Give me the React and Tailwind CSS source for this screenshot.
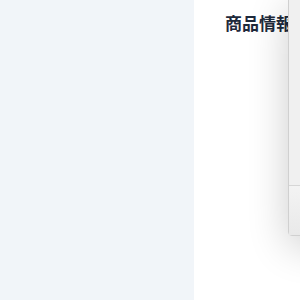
export default function App() {
    return (
        <div className="relative flex h-[300px] w-[300px] overflow-hidden bg-white" style={{fontFamily: '"Noto Sans CJK JP", "Noto Sans", sans-serif'}}>
            {/* Sidebar */}
            <aside className="h-full w-[194px] shrink-0 bg-[#f1f5f9]"></aside>

            {/* Main */}
            <main className="flex-1 pl-[31px] pt-[11px]">
                <h1 className="whitespace-nowrap text-[17px] font-bold leading-6 text-[#1e293b]">商品情報</h1>
            </main>

            {/* Overlay panel */}
            <div className="absolute left-[288px] top-[-2px] flex h-[238px] w-[200px] flex-col rounded-bl-sm border border-[#d0d0d0] bg-[#f0f0f0] shadow-[0_10px_40px_rgba(0,0,0,0.2)]">
                <div className="h-[187px] border-b border-[#d6d6d6]"></div>
                <div className="flex-1 bg-gradient-to-b from-[#f3f3f3] to-[#e9e9e9]"></div>
            </div>
        </div>
    );
}
